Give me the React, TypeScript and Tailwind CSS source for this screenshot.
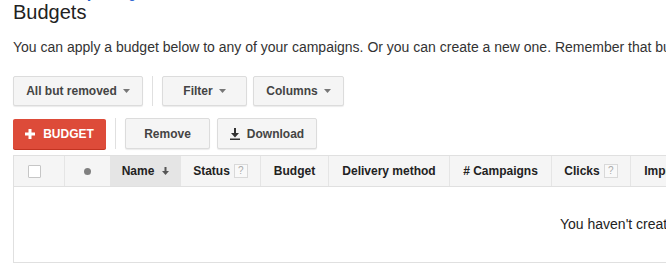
import React from "react";

const font = "font-['Liberation_Sans',Arial,sans-serif]";

function Caret() {
  return (
    <svg width="7" height="4" viewBox="0 0 7 4" className="ml-[6px]">
      <path d="M0 0h7L3.5 4z" fill="#777" />
    </svg>
  );
}

function HelpBox() {
  return (
    <span className="ml-[4px] inline-flex h-[14px] w-[14px] items-center justify-center border border-[#d9d9d9] bg-[#f9f9f9] text-[10px] font-normal leading-none text-[#aaa]">
      ?
    </span>
  );
}

function Btn({ width, children }: { width: string; children: React.ReactNode }) {
  return (
    <button
      className={`flex h-full items-center justify-center rounded-[2px] border border-[#dcdcdc] bg-[#f5f5f5] text-[12px] font-bold text-[#444] shadow-[0_1px_1px_rgba(0,0,0,0.08)] ${width}`}
    >
      {children}
    </button>
  );
}

function Sep() {
  return <div className="mx-[9px] h-full w-px bg-[#e0e0e0]" />;
}

export default function App() {
  const cols = [
    { label: "Status", w: "w-[80px]", help: true },
    { label: "Budget", w: "w-[68px]" },
    { label: "Delivery method", w: "w-[121px]" },
    { label: "# Campaigns", w: "w-[102px]" },
    { label: "Clicks", w: "w-[79px]", help: true },
    { label: "Impr.", w: "w-[74px]", help: true },
    { label: "CTR", w: "w-[80px]", help: true },
  ];

  return (
    <div className={`h-screen w-full overflow-hidden bg-white pl-[13px] ${font}`}>
      {/* breadcrumb, mostly scrolled off */}
      <div className="h-[2px] overflow-hidden">
        <div className="-mt-[14px] text-[13px] leading-[16px] text-[#15c]">
          Shared library › Budgets
        </div>
      </div>

      <h1 className="text-[20px] leading-[20px] font-normal text-[#222]">Budgets</h1>

      <p className="mt-[17px] whitespace-nowrap text-[14px] leading-[16px] text-[#333]">
        You can apply a budget below to any of your campaigns. Or you can create a new one. Remember that
        budgets are shared across campaigns.
      </p>

      {/* toolbar row 1 */}
      <div className="mt-[21px] flex h-[30px] items-center">
        <Btn width="w-[130px]">
          All but removed
          <Caret />
        </Btn>
        <Sep />
        <Btn width="w-[85px]">
          Filter
          <Caret />
        </Btn>
        <div className="w-[6px]" />
        <Btn width="w-[91px]">
          Columns
          <Caret />
        </Btn>
      </div>

      {/* toolbar row 2 */}
      <div className="mt-[12px] flex h-[31px] items-center">
        <button className="flex h-[30px] w-[93px] items-center justify-center rounded-[2px] bg-[#dd4b39] text-[12px] font-bold text-white shadow-[0_1px_0_#c23321]">
          <svg width="10" height="10" viewBox="0 0 10 10" className="mr-[8px]">
            <path d="M3.5 0h3v3.5H10v3H6.5V10h-3V6.5H0v-3h3.5z" fill="#fff" />
          </svg>
          BUDGET
        </button>
        <Sep />
        <Btn width="w-[85px]">Remove</Btn>
        <div className="w-[7px]" />
        <Btn width="w-[100px]">
          <svg width="10" height="12" viewBox="0 0 10 12" className="mr-[7px]">
            <path d="M4 0h2v5h3L5 9.5 1 5h3z" fill="#333" />
            <rect x="0" y="10.5" width="10" height="1.5" fill="#333" />
          </svg>
          Download
        </Btn>
      </div>

      {/* table */}
      <div className="mt-[6px] w-[1300px] border border-[#e0e0e0]">
        <div className="flex h-[31px] border-b border-[#e0e0e0] bg-[#f5f5f5] text-[12px] font-bold text-[#222]">
          <div className="flex w-[51px] items-center border-r border-[#e5e5e5] pl-[14px]">
            <span className="h-[13px] w-[13px] rounded-[1px] border border-[#c6c6c6] bg-white" />
          </div>
          <div className="flex w-[46px] items-center justify-center border-r border-[#e5e5e5]">
            <span className="h-[7px] w-[7px] rounded-full bg-[#808080]" />
          </div>
          <div className="flex w-[70px] items-center justify-center border-r border-[#e5e5e5] bg-[#e5e5e5]">
            Name
            <svg width="7" height="8" viewBox="0 0 7 8" className="ml-[8px]">
              <path d="M2.5 0h2v4H7L3.5 8 0 4h2.5z" fill="#555" />
            </svg>
          </div>
          {cols.map((c) => (
            <div
              key={c.label}
              className={`flex items-center justify-center border-r border-[#e5e5e5] ${c.w}`}
            >
              {c.label}
              {c.help && <HelpBox />}
            </div>
          ))}
        </div>
        <div className="flex h-[75px] items-center pl-[546px] text-[14px] text-[#222]">
          You haven't created any budgets yet.
        </div>
      </div>
    </div>
  );
}
